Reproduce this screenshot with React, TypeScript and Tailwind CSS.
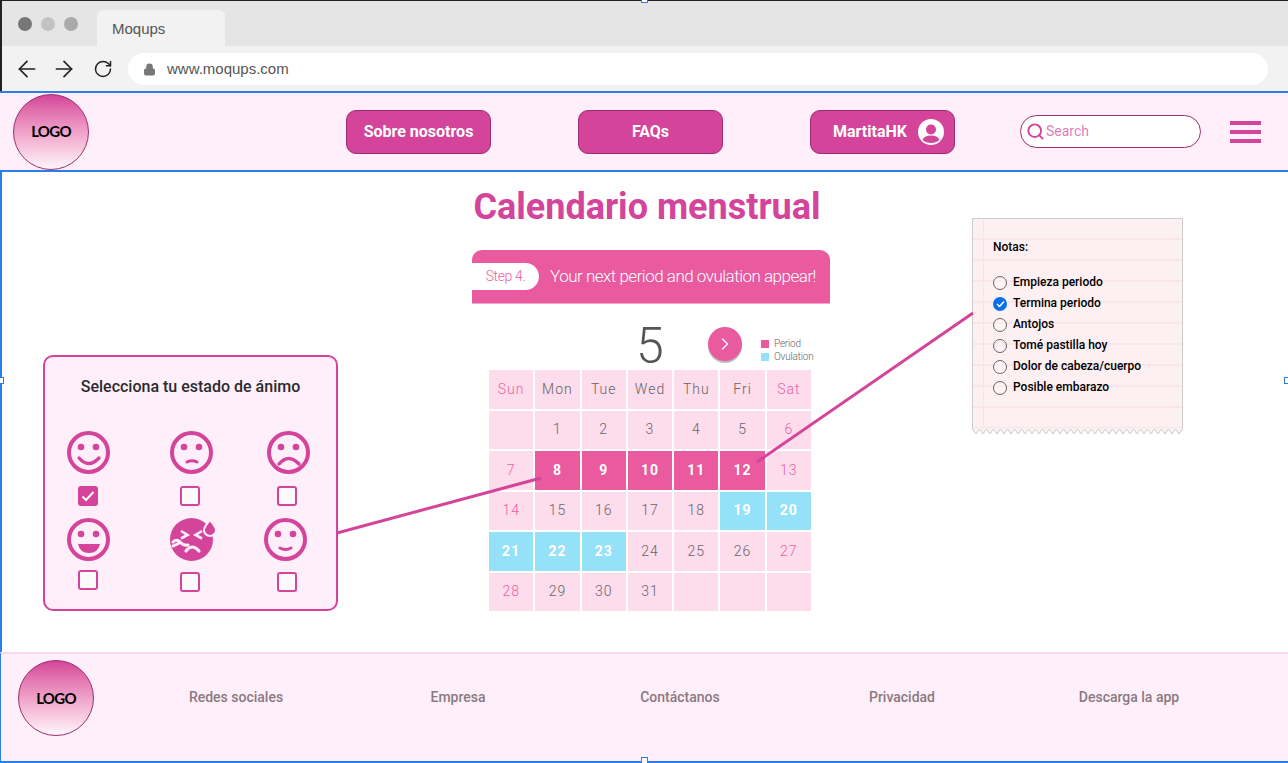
import React from 'react';
import { ArrowLeft, ArrowRight, RotateCw, Search, Lock, ChevronRight } from 'lucide-react';

const pink = '#d4449a';

const Logo = () => (
    <div className="w-[76px] h-[76px] rounded-full border border-[#9c2d6e] bg-gradient-to-b from-[#d4449a] to-[#fdf6fa] flex items-center justify-center shrink-0">
        <span className="text-[15px] font-bold text-black font-['Lato',sans-serif] tracking-[-0.7px]">LOGO</span>
    </div>
);

const Face = ({ children, filled }: { children: React.ReactNode; filled?: boolean }) => (
    <svg width="47" height="43" viewBox="0 0 47 43" fill="none">
        <circle cx="21.5" cy="21.5" r={filled ? 21.5 : 19.5} fill={filled ? pink : 'none'} stroke={filled ? 'none' : pink} strokeWidth="4" />
        {children}
    </svg>
);

const Eyes = () => (
    <>
        <circle cx="14" cy="16" r="3.3" fill={pink} />
        <circle cx="29" cy="16" r="3.3" fill={pink} />
    </>
);

const faces = [
    <Face key="1"><Eyes /><path d="M12 27 Q21.5 38 32 27" stroke={pink} strokeWidth="3.4" strokeLinecap="round" /></Face>,
    <Face key="2"><Eyes /><path d="M17 31 Q22 28.5 27 31" stroke={pink} strokeWidth="3" strokeLinecap="round" /></Face>,
    <Face key="3"><Eyes /><path d="M12 33 Q21.5 22 32 33" stroke={pink} strokeWidth="3.4" strokeLinecap="round" /></Face>,
    <Face key="4"><Eyes /><path d="M11 26 H33 Q31 35 22 35 Q13 35 11 26 Z" fill={pink} /></Face>,
    <Face key="5" filled>
        <path d="M11 13 L17.5 17 L11 20.5 M32 13 L25.5 17 L32 20.5" stroke="#feeffb" strokeWidth="2.6" />
        <path d="M16 33 Q22 25 29 33" stroke="#feeffb" strokeWidth="3.2" strokeLinecap="round" />
        <path d="M3 24 Q6 21 9 23 Q13 28 18 27 M3 28 Q6 27 9 25" stroke="#feeffb" strokeWidth="3" strokeLinecap="round" />
        <path d="M40 2 Q46 9 46 12 A6 6 0 0 1 34 12 Q34 9 40 2 Z" fill={pink} stroke="#feeffb" strokeWidth="2" />
    </Face>,
    <Face key="6"><Eyes /><path d="M16 30 Q21.5 33 27 30" stroke={pink} strokeWidth="3" strokeLinecap="round" /></Face>,
];

const CheckBox = ({ checked }: { checked?: boolean }) => (
    <div className={`w-[20px] h-[20px] rounded-[3px] border-2 border-[#d4449a] flex items-center justify-center ${checked ? 'bg-[#d4449a]' : 'bg-[#fafafa]'}`}>
        {checked && (
            <svg width="14" height="12" viewBox="0 0 14 12" fill="none">
                <path d="M1.5 6.5 L5 10 L12.5 2" stroke="white" strokeWidth="2" />
            </svg>
        )}
    </div>
);

const NavButton = ({ children, className }: { children: React.ReactNode; className: string }) => (
    <div className={`w-[145px] h-[44px] rounded-[10px] bg-[#d4449a] border border-[#9c2d6e] text-white text-[16px] font-bold flex items-center justify-center ${className}`}>
        {children}
    </div>
);

const days = ['Sun', 'Mon', 'Tue', 'Wed', 'Thu', 'Fri', 'Sat'];
const weeks = [
    ['', '1', '2', '3', '4', '5', '6'],
    ['7', '8', '9', '10', '11', '12', '13'],
    ['14', '15', '16', '17', '18', '19', '20'],
    ['21', '22', '23', '24', '25', '26', '27'],
    ['28', '29', '30', '31', '', '', ''],
];
const period = ['8', '9', '10', '11', '12'];
const ovulation = ['19', '20', '21', '22', '23'];

const dayClass = (d: string, col: number) => {
    if (period.includes(d)) return 'bg-[#e95a9f] text-white font-bold';
    if (ovulation.includes(d)) return 'bg-[#95e1f8] text-white font-bold';
    if (col === 0 || col === 6) return 'bg-[#fddcec] text-[#ee5ea6] font-light';
    return 'bg-[#fddcec] text-[#666] font-light';
};

const notes = ['Empieza periodo', 'Termina periodo', 'Antojos', 'Tomé pastilla hoy', 'Dolor de cabeza/cuerpo', 'Posible embarazo'];
const footerLinks = ['Redes sociales', 'Empresa', 'Contáctanos', 'Privacidad', 'Descarga la app'];

// torn bottom edge of the note
const zigzag = `M0.5 0 L0.5 1 ${Array.from({ length: 30 }, (_, i) => `L${i * 7 + 4} 6 L${i * 7 + 7.5} 1`).join(' ')} L210.5 1 L210.5 0`;

const Handle = ({ className }: { className: string }) => (
    <div className={`absolute w-[7px] h-[7px] bg-white border border-[#2b7de9] ${className}`} />
);

const App: React.FC = () => {
    return (
        <div className="relative w-[1288px] h-[763px] overflow-hidden bg-white font-['Roboto',sans-serif] flex flex-col">
            {/* browser chrome */}
            <div className="h-[46px] bg-[#e5e5e5] flex items-end shrink-0 border-t border-t-[#222] border-l-2 border-l-[#222]">
                <div className="flex items-center gap-[9px] ml-[16px] mb-[15px]">
                    <span className="w-[14px] h-[14px] rounded-full bg-[#777]" />
                    <span className="w-[14px] h-[14px] rounded-full bg-[#c2c2c2]" />
                    <span className="w-[14px] h-[14px] rounded-full bg-[#aaa]" />
                </div>
                <div className="ml-[19px] w-[128px] h-[36px] bg-[#f2f2f2] rounded-t-[6px] flex items-center pl-[15px] pt-[2px] text-[15px] text-[#555] font-['Liberation_Sans',sans-serif]">
                    Moqups
                </div>
            </div>
            <div className="h-[45px] bg-[#f2f2f2] flex items-center shrink-0 border-l-2 border-l-[#222] pt-[1px]">
                <ArrowLeft size={26} strokeWidth={1.6} className="ml-[12px] text-[#222]" />
                <ArrowRight size={26} strokeWidth={1.6} className="ml-[11px] text-[#222]" />
                <RotateCw size={20} strokeWidth={1.8} className="ml-[16px] text-[#222]" />
                <div className="ml-[15px] w-[1140px] h-[32px] bg-white rounded-full flex items-center pl-[15px] text-[15px] text-[#555] font-['Liberation_Sans',sans-serif]">
                    <Lock size={13} fill="#777" stroke="#777" />
                    <span className="ml-[11px]">www.moqups.com</span>
                </div>
            </div>

            {/* header */}
            <div className="h-[81px] bg-[#feeffb] border-y-2 border-[#2b7de9] flex items-center shrink-0">
                <div className="ml-[13px]"><Logo /></div>
                <NavButton className="ml-[257px]">Sobre nosotros</NavButton>
                <NavButton className="ml-[87px]">FAQs</NavButton>
                <NavButton className="ml-[87px] pl-[12px]">
                    <span>MartitaHK</span>
                    <svg className="ml-[11px]" width="26" height="26" viewBox="0 0 26 26">
                        <circle cx="13" cy="13" r="13" fill="white" />
                        <circle cx="13" cy="10.5" r="5" fill={pink} />
                        <path d="M4.5 21 Q6 16.5 13 16.5 Q20 16.5 21.5 21 Q18 24 13 24 Q8 24 4.5 21 Z" fill={pink} />
                    </svg>
                </NavButton>
                <div className="ml-[65px] w-[181px] h-[33px] rounded-full bg-white border border-[#9c2d6e] flex items-center pl-[5px]">
                    <Search size={19} strokeWidth={2.4} className="text-[#d4449a]" />
                    <span className="ml-[1px] text-[14px] text-[#e07fb8]">Search</span>
                </div>
                <div className="ml-[29px] w-[31px] flex flex-col gap-[5px]">
                    <span className="h-[4px] bg-[#d4449a]" />
                    <span className="h-[4px] bg-[#d4449a]" />
                    <span className="h-[4px] bg-[#d4449a]" />
                </div>
            </div>

            {/* main */}
            <div className="relative flex-1 flex items-start border-l-2 border-l-[#2b7de9]">
                <div className="ml-[41px] mt-[183px] w-[295px] h-[256px] rounded-[10px] border-2 border-[#d4449a] bg-[#feeffb] shrink-0">
                    <div className="mt-[18px] text-center text-[16px] font-medium text-[#2b2b2b]">Selecciona tu estado de ánimo</div>
                    <div className="mt-[32px] ml-[13px] grid grid-cols-[103px_97px_60px] auto-rows-[87px]">
                        {faces.map((f, i) => (
                            <div key={i} className="w-[60px] flex flex-col items-center">
                                <div className={`h-[43px] ${i === 5 ? 'pr-[2px]' : 'pl-[4px]'}`}>{f}</div>
                                <div className={`${i === 3 ? 'mt-[9px]' : i > 3 ? 'mt-[11px]' : 'mt-[12px]'} ${i % 3 === 0 ? '' : 'pr-[2px]'}`}>
                                    <CheckBox checked={i === 0} />
                                </div>
                            </div>
                        ))}
                    </div>
                </div>

                <div className="ml-[134px] w-[358px] shrink-0 flex flex-col">
                    <h1 className="mt-[12px] pr-[8px] text-[36px] leading-[46px] font-bold text-[#d4449a] text-center whitespace-nowrap">Calendario menstrual</h1>
                    <div className="mt-[20px] h-[54px] bg-[#e95a9f] rounded-t-[10px] flex items-center border-b border-[#f7a8cc]">
                        <div className="w-[67px] h-[27px] shrink-0 bg-white rounded-r-full flex items-center justify-center text-[#ee5ea6] text-[14px] font-light tracking-[-0.4px]">Step 4.</div>
                        <span className="ml-[11px] text-white text-[17px] font-light whitespace-nowrap tracking-[-0.5px]">Your next period and ovulation appear!</span>
                    </div>
                    <div className="h-[66px] ml-[164px] flex items-start">
                        <span className="mt-[17px] w-[29px] text-[50px] leading-[50px] font-light text-[#555]">5</span>
                        <div className="ml-[43px] mt-[23px] w-[34px] h-[34px] rounded-full bg-[#e95a9f] shadow-[0_2px_0_#bbb] flex items-center justify-center text-white">
                            <ChevronRight size={20} strokeWidth={1.5} />
                        </div>
                        <div className="ml-[19px] mt-[33px] flex flex-col text-[10px] leading-[13px] font-light text-[#666] tracking-[-0.2px]">
                            <span className="flex items-center gap-[5px]"><i className="w-[8px] h-[8px] bg-[#e95a9f]" />Period</span>
                            <span className="flex items-center gap-[5px]"><i className="w-[8px] h-[8px] bg-[#95e1f8]" />Ovulation</span>
                        </div>
                    </div>
                    <div className="ml-[17px] w-[322px] grid grid-cols-7 gap-[2px] auto-rows-[38.5px] text-[14px] tracking-[1px]">
                        {days.map((d, i) => (
                            <div key={d} className={`flex items-center justify-center ${dayClass(d, i)}`}>{d}</div>
                        ))}
                        {weeks.flatMap((w, r) =>
                            w.map((d, i) => (
                                <div key={`${r}-${i}`} className={`flex items-center justify-center ${dayClass(d, i)}`}>{d}</div>
                            ))
                        )}
                    </div>
                </div>

                <div className="relative ml-[142px] mt-[46px] w-[211px] h-[211px] border border-b-0 border-[#ccc] shrink-0 bg-[#fdf0f3] bg-[repeating-linear-gradient(to_bottom,transparent_0,transparent_19px,#f8e6ea_19px,#f8e6ea_21px)]">
                    <div className="absolute left-[10px] top-0 bottom-0 w-[1px] bg-[#fce4d8]" />
                    <div className="relative pl-[20px] pt-[20px] text-[12px] font-medium text-black">
                        <div className="leading-[16px]">Notas:</div>
                        <div className="mt-[16px] flex flex-col">
                            {notes.map((n, i) => (
                                <div key={n} className="h-[21px] flex items-center gap-[6px]">
                                    {i === 1 ? (
                                        <span className="mt-[2px] w-[14px] h-[14px] rounded-full bg-[#0b6fe8] flex items-center justify-center">
                                            <svg width="9" height="8" viewBox="0 0 9 8" fill="none"><path d="M1 4 L3.5 6.5 L8 1.5" stroke="white" strokeWidth="1.5" /></svg>
                                        </span>
                                    ) : (
                                        <span className="mt-[2px] w-[14px] h-[14px] rounded-full border border-[#666] bg-white/30" />
                                    )}
                                    <span>{n}</span>
                                </div>
                            ))}
                        </div>
                    </div>
                    <svg className="absolute left-[-1px] bottom-[-6px]" width="211" height="7" viewBox="0 0 211 7">
                        <path d={zigzag} fill="#fdf0f3" stroke="#ccc" />
                    </svg>
                </div>

                {/* connector lines */}
                <svg className="absolute left-[-2px] top-0 pointer-events-none" width="1288" height="480">
                    <line x1="337" y1="361" x2="541" y2="306" stroke={pink} strokeWidth="3" />
                    <line x1="973" y1="141" x2="757" y2="290" stroke={pink} strokeWidth="3" />
                </svg>
            </div>

            {/* footer */}
            <div className="h-[111px] shrink-0 bg-[#feeffb] border-t-2 border-t-[#fbd9ec] border-b-2 border-b-[#2b7de9] border-l border-l-[#2b7de9] flex items-start">
                <div className="ml-[17px] mt-[6px]"><Logo /></div>
                <div className="ml-[31px] mt-[33px] grid grid-cols-[222px_222px_222px_222px_232px] text-[14px] font-medium text-[#8a7a80] text-center">
                    {footerLinks.map((l) => <span key={l}>{l}</span>)}
                </div>
            </div>

            <Handle className="left-[641px] top-[-4px]" />
            <Handle className="left-[-3px] top-[377px]" />
            <Handle className="right-[-3px] top-[377px]" />
            <Handle className="left-[641px] bottom-[-1px]" />
        </div>
    );
};

export default App;
